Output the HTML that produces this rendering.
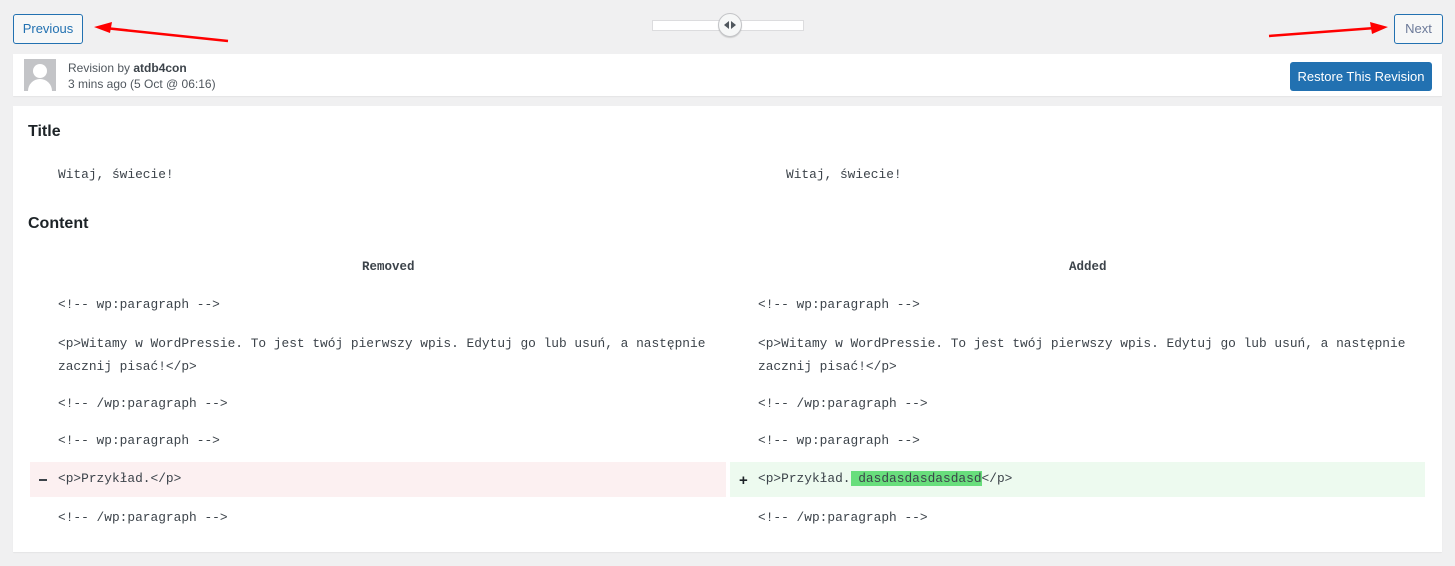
<!DOCTYPE html>
<html><head><meta charset="utf-8"><style>
*{box-sizing:border-box;margin:0;padding:0}
body{width:1455px;height:566px;background:#f0f0f1;font-family:"Liberation Sans",sans-serif;color:#3c434a;position:relative;overflow:hidden;font-size:13px}
.btn{position:absolute;height:30px;border:1px solid #2271b1;border-radius:3px;background:#f6f7f7;color:#2271b1;font-size:13px;line-height:28px;text-align:center}
.mono{font-family:"Liberation Mono",monospace;font-size:12.85px;color:#3c434a;position:absolute;white-space:pre}
.h{position:absolute;font-size:16px;font-weight:bold;color:#1d2327}
.th{position:absolute;font-family:"Liberation Mono",monospace;font-weight:bold;font-size:12.5px;color:#3c434a}
</style></head><body>
<div class="btn" style="left:13px;top:14px;width:70px">Previous</div>
<div class="btn" style="left:1394px;top:14px;width:49px;color:#6c7a99;border-color:#2271b1">Next</div>
<div style="position:absolute;left:652px;top:20px;width:152px;height:11px;background:#fff;border:1px solid #dcdcde"></div>
<div style="position:absolute;left:718px;top:13px;width:24px;height:24px;border-radius:50%;background:#f6f7f7;border:1px solid #c3c4c7;box-shadow:0 1px 1px rgba(0,0,0,.15)"></div>
<svg style="position:absolute;left:724px;top:21px" width="12" height="8"><path d="M0 4L5 0V8Z M12 4L7 0V8Z" fill="#50575e"/></svg>
<svg style="position:absolute;left:0;top:0" width="1455" height="60">
<path d="M228 41L105 28" stroke="#f00" stroke-width="2.5"/><path d="M94 27L112 22L110 33Z" fill="#f00"/>
<path d="M1269 36L1375 28" stroke="#f00" stroke-width="2.5"/><path d="M1388 27L1370 22L1372 34Z" fill="#f00"/>
</svg>
<div style="position:absolute;left:13px;top:54px;width:1429px;height:42px;background:#fff;box-shadow:0 1px 1px rgba(0,0,0,.05)"></div>
<div style="position:absolute;left:24px;top:59px;width:32px;height:32px;background:#c3c4c7;overflow:hidden">
<div style="position:absolute;left:9px;top:5px;width:14px;height:14px;border-radius:50%;background:#fff"></div>
<div style="position:absolute;left:4px;top:20px;width:24px;height:20px;border-radius:12px 12px 0 0;background:#fff"></div></div>
<div style="position:absolute;left:68px;top:60px;font-size:12px;line-height:16px;color:#50575e">Revision by <b style="color:#3c434a">atdb4con</b><br>3 mins ago (5 Oct @ 06:16)</div>
<div style="position:absolute;left:1290px;top:62px;width:142px;height:29px;background:#2271b1;border-radius:3px;color:#fff;font-size:13px;line-height:29px;text-align:center">Restore This Revision</div>
<div style="position:absolute;left:13px;top:106px;width:1429px;height:446px;background:#fff;box-shadow:0 1px 1px rgba(0,0,0,.05)"></div>
<div class="h" style="left:28px;top:123px">Title</div>
<div class="mono" style="left:58px;top:167px">Witaj, świecie!</div>
<div class="mono" style="left:786px;top:167px">Witaj, świecie!</div>
<div class="h" style="left:28px;top:215px">Content</div>
<div class="th" style="left:362px;top:260px">Removed</div>
<div class="th" style="left:1069px;top:260px">Added</div>
<div class="mono" style="left:58px;top:297px">&lt;!-- wp:paragraph --&gt;</div>
<div class="mono" style="left:758px;top:297px">&lt;!-- wp:paragraph --&gt;</div>
<div class="mono" style="left:58px;top:332px;line-height:23px">&lt;p&gt;Witamy w WordPressie. To jest twój pierwszy wpis. Edytuj go lub usuń, a następnie
zacznij pisać!&lt;/p&gt;</div>
<div class="mono" style="left:758px;top:332px;line-height:23px">&lt;p&gt;Witamy w WordPressie. To jest twój pierwszy wpis. Edytuj go lub usuń, a następnie
zacznij pisać!&lt;/p&gt;</div>
<div class="mono" style="left:58px;top:396px">&lt;!-- /wp:paragraph --&gt;</div>
<div class="mono" style="left:758px;top:396px">&lt;!-- /wp:paragraph --&gt;</div>
<div class="mono" style="left:58px;top:433px">&lt;!-- wp:paragraph --&gt;</div>
<div class="mono" style="left:758px;top:433px">&lt;!-- wp:paragraph --&gt;</div>
<div style="position:absolute;left:30px;top:462px;width:696px;height:35px;background:#fcf0f1"></div>
<div style="position:absolute;left:730px;top:462px;width:695px;height:35px;background:#edfaef"></div>
<div style="position:absolute;left:39px;top:479px;width:8px;height:2px;background:#3c434a"></div>
<div style="position:absolute;left:739px;top:472px;font-weight:bold;font-size:15px;color:#1d2327">+</div>
<div class="mono" style="left:58px;top:471px">&lt;p&gt;Przykład.&lt;/p&gt;</div>
<div class="mono" style="left:758px;top:471px">&lt;p&gt;Przykład.<span style="background:#68de7c"> dasdasdasdasdasd</span>&lt;/p&gt;</div>
<div class="mono" style="left:58px;top:510px">&lt;!-- /wp:paragraph --&gt;</div>
<div class="mono" style="left:758px;top:510px">&lt;!-- /wp:paragraph --&gt;</div>
</body></html>
